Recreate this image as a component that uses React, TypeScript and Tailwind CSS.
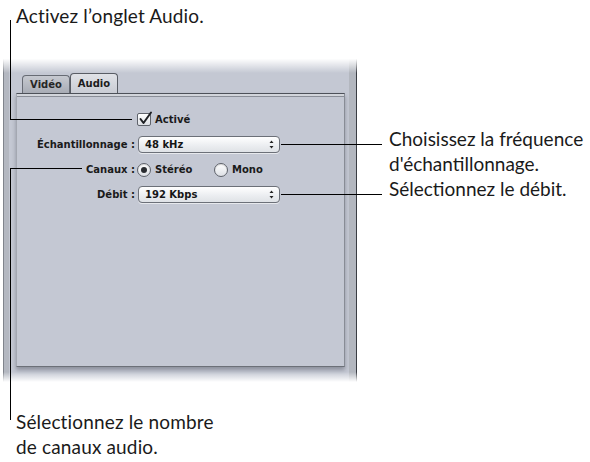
import React from "react";

const ui = { fontFamily: '"DejaVu Sans", Verdana, sans-serif' };
const note = { fontFamily: 'Lato, "Noto Sans", sans-serif' };

function Arrows() {
  return (
    <svg width="5" height="9" viewBox="0 0 5 9" className="block">
      <path d="M2.5 0.5 L4.5 3 L0.5 3 Z" fill="#222" />
      <path d="M2.5 8.5 L4.5 6 L0.5 6 Z" fill="#222" />
    </svg>
  );
}

function Select({ value }: { value: string }) {
  return (
    <div className="ml-px flex h-[17px] w-[142px] items-center justify-between rounded-[4px] border border-[#6c7078] bg-[linear-gradient(to_bottom,#ffffff,#eceef1_55%,#dfe2e6)] pl-[6px] pr-[5px] shadow-[0_1px_0_rgba(255,255,255,0.6)]">
      <span className="text-[10px] font-bold leading-none text-[#161616]">{value}</span>
      <Arrows />
    </div>
  );
}

function Radio({ on }: { on?: boolean }) {
  return (
    <div className="flex h-[14px] w-[14px] items-center justify-center rounded-full border border-[#5f636b] bg-[linear-gradient(to_bottom,#ffffff,#dde0e5)] shadow-[inset_0_1px_1px_rgba(0,0,0,0.15)]">
      {on && <div className="h-[6px] w-[6px] rounded-full bg-[#2a2c30]" />}
    </div>
  );
}

function Checkbox() {
  return (
    <div className="relative h-[13px] w-[14px] rounded-[2px] border border-[#5f636b] bg-[linear-gradient(to_bottom,#ffffff,#dde0e5)]">
      <svg width="15" height="15" viewBox="0 0 15 15" className="absolute -top-[3px] left-0">
        <path d="M2.5 8 L5.5 12 L13 1.5" fill="none" stroke="#1e2024" strokeWidth="2" strokeLinecap="round" strokeLinejoin="round" />
      </svg>
    </div>
  );
}

function Row({ label, children }: { label?: string; children: React.ReactNode }) {
  return (
    <div className="flex h-[25px] items-center">
      <div className="w-[118px] text-right text-[10px] font-bold leading-none text-[#1a1a1a]">{label}</div>
      <div className="ml-[2px] flex items-center">{children}</div>
    </div>
  );
}

function Window() {
  return (
    <div
      className="relative h-[327px] w-[354px] bg-[#c4c8d3] pt-[18px] shadow-[inset_1px_0_0_#80848c,inset_6px_0_0_#b4b8c1,inset_-1px_0_0_#3a3d43,inset_-8px_0_0_#b3b7bf]"
      style={ui}
    >
      <div className="flex h-[20px] items-end pl-[19px]">
        <div className="flex h-[18px] w-[48px] items-center justify-center rounded-t-[4px] border border-b-0 border-[#676b74] bg-[linear-gradient(to_bottom,#c6c9d0,#a8acb5)] text-[10px] font-bold text-[#262626]">
          Vidéo
        </div>
        <div className="flex h-[20px] w-[48px] items-center justify-center rounded-t-[4px] border border-b-0 border-[#595d65] bg-[linear-gradient(to_bottom,#e0e2e7,#c9ccd4)] text-[10px] font-bold text-[#1c1c1c]">
          Audio
        </div>
      </div>
      <div className="ml-[13px] h-[274px] w-[329px] border-t border-t-[#4d5159] border-l border-l-[#a4a8b1] border-r border-r-[#888c95] border-b border-b-[#6c7078] bg-[#c4c8d3] shadow-[0_3px_4px_rgba(40,44,56,0.35)]">
        <div className="h-[3px] border-b border-b-[#8a8e97] bg-[#d2d5db]" />
        <div className="pt-[10px]">
          <Row>
            <Checkbox />
            <span className="ml-[4px] text-[10px] font-bold leading-none text-[#1a1a1a]">Activé</span>
          </Row>
          <Row label="Échantillonnage :">
            <Select value="48 kHz" />
          </Row>
          <Row label="Canaux :">
            <Radio on />
            <span className="ml-[4px] w-[59px] text-[10px] font-bold leading-none text-[#1a1a1a]">Stéréo</span>
            <Radio />
            <span className="ml-[4px] text-[10px] font-bold leading-none text-[#1a1a1a]">Mono</span>
          </Row>
          <Row label="Débit :">
            <Select value="192 Kbps" />
          </Row>
        </div>
      </div>
      <div className="pointer-events-none absolute inset-x-0 top-0 h-[18px] bg-[linear-gradient(to_bottom,#ffffff_20%,rgba(255,255,255,0))]" />
      <div className="pointer-events-none absolute inset-x-0 bottom-0 h-[10px] bg-[linear-gradient(to_bottom,rgba(255,255,255,0),#ffffff)]" />
    </div>
  );
}

export default function App() {
  return (
    <div className="relative h-[462px] w-[590px] overflow-hidden bg-white">
      <div className="pl-[3px] pt-[55px]">
        <Window />
      </div>

      {/* callout lines */}
      <div className="absolute left-[10px] top-[20px] h-[100px] w-px bg-black" />
      <div className="absolute left-[10px] top-[119px] h-px w-[122px] bg-black" />
      <div className="absolute left-[10px] top-[168px] h-px w-[72px] bg-black" />
      <div className="absolute left-[10px] top-[168px] h-[252px] w-px bg-black" />
      <div className="absolute left-[281px] top-[144px] h-px w-[101px] bg-black" />
      <div className="absolute left-[281px] top-[194px] h-px w-[101px] bg-black" />

      {/* callout texts */}
      <div className="absolute left-[16px] top-[3px] text-[19px] leading-[25px] tracking-[0.15px] text-[#1a1a1a]" style={note}>
        Activez l’onglet Audio.
      </div>
      <div className="absolute left-[389px] top-[126px] text-[19px] leading-[25px] text-[#1a1a1a]" style={note}>
        <div>Choisissez la fréquence</div>
        <div>d'échantillonnage.</div>
        <div>Sélectionnez le débit.</div>
      </div>
      <div className="absolute left-[16px] top-[409px] text-[19px] leading-[25px] tracking-[0.15px] text-[#1a1a1a]" style={note}>
        <div>Sélectionnez le nombre</div>
        <div>de canaux audio.</div>
      </div>
    </div>
  );
}
